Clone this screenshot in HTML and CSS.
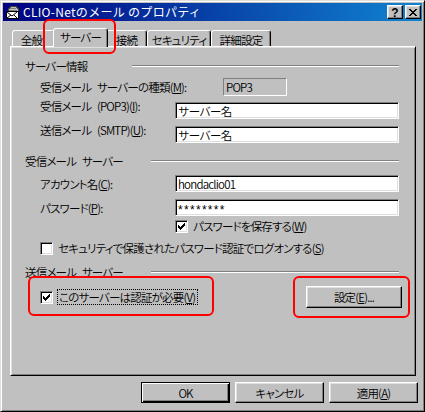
FILE: index.html
```html
<!DOCTYPE html>
<html lang="ja">
<head>
<meta charset="utf-8">
<title>CLIO-Netのメール のプロパティ</title>
<link rel="stylesheet" href="styles.css">
</head>
<body>
<div class="window">
  <div class="titlebar">
    <svg class="app-icon" width="16" height="16" viewBox="0 0 16 16" shape-rendering="crispEdges">
      <path d="M3 8V4h1V3h1V2h6v1h1v1h1v4z" fill="#c0c0c0" stroke="#404040" stroke-width="1"/>
      <path d="M5 4h6M4 6h8" stroke="#808080" stroke-width="1"/>
      <rect x="1.5" y="7.5" width="12" height="7" fill="#fff" stroke="#000"/>
      <path d="M2 8l5 4l5-4M2 14l4-3M12 14l-3-3" fill="none" stroke="#000" stroke-width="1" shape-rendering="auto"/>
    </svg>
    <span class="title">CLIO-Netのメール のプロパティ</span>
    <div class="caption-buttons">
      <span class="cap-btn help">?</span>
      <span class="cap-btn close">
        <svg width="8" height="7" viewBox="0 0 8 7" shape-rendering="crispEdges"><path d="M0 0h2v1H0zM6 0h2v1H6zM1 1h2v1H1zM5 1h2v1H5zM2 2h4v1H2zM3 3h2v1H3zM2 4h4v1H2zM1 5h2v1H1zM5 5h2v1H5zM0 6h2v1H0zM6 6h2v1H6z" fill="#000"/></svg>
      </span>
    </div>
  </div>

  <div class="content">
    <div class="tabs">
      <div class="tab t1">全般</div>
      <div class="tab t2 active">サーバー</div>
      <div class="tab t3">接続</div>
      <div class="tab t4">セキュリティ</div>
      <div class="tab t5">詳細設定</div>
    </div>

    <div class="panel">
      <div class="group-head gh1"><span class="gh-text">サーバー情報</span><span class="etch etch-long"></span></div>
      <div class="row row-m">
        <span class="label label-wide">受信メール サーバーの種類(<u>M</u>):</span>
        <span class="static-field">POP3</span>
      </div>
      <div class="row row-c">
        <span class="label label-up">受信メール (POP3)(<u>I</u>):</span>
        <div class="edit">サーバー名</div>
      </div>
      <div class="row row-d">
        <span class="label label-up">送信メール (SMTP)(<u>U</u>):</span>
        <div class="edit">サーバー名</div>
      </div>

      <div class="group-head gh2"><span class="gh-text">受信メール サーバー</span><span class="etch etch-short"></span></div>
      <div class="row row-f">
        <span class="label">アカウント名(<u>C</u>):</span>
        <div class="edit">hondaclio01</div>
      </div>
      <div class="row row-g">
        <span class="label">パスワード(<u>P</u>):</span>
        <div class="edit edit-pw">********</div>
      </div>
      <div class="row row-h">
        <span class="label"></span>
        <span class="checkbox checked"><svg width="7" height="7" viewBox="0 0 7 7" shape-rendering="crispEdges"><path d="M6 0h1v1H6zM5 1h2v1H5zM0 2h1v1H0zM4 2h3v1H4zM0 3h2v1H0zM3 3h3v1H3zM0 4h5v1H0zM1 5h3v1H1zM2 6h1v1H2z" fill="#000"/></svg></span>
        <span class="cb-text">パスワードを保存する(<u>W</u>)</span>
      </div>
      <div class="row row-i">
        <span class="checkbox"></span>
        <span class="cb-text">セキュリティで保護されたパスワード認証でログオンする(<u>S</u>)</span>
      </div>

      <div class="group-head gh3"><span class="gh-text">送信メール サーバー</span><span class="etch etch-short"></span></div>
      <div class="row row-k">
        <span class="checkbox checked"><svg width="7" height="7" viewBox="0 0 7 7" shape-rendering="crispEdges"><path d="M6 0h1v1H6zM5 1h2v1H5zM0 2h1v1H0zM4 2h3v1H4zM0 3h2v1H0zM3 3h3v1H3zM0 4h5v1H0zM1 5h3v1H1zM2 6h1v1H2z" fill="#000"/></svg></span>
        <span class="cb-text focus">このサーバーは認証が必要(<u>V</u>)</span>
        <span class="btn btn-settings">設定(<u>E</u>)...</span>
      </div>
    </div>

    <div class="dialog-buttons">
      <span class="btn btn-dlg default">OK</span>
      <span class="btn btn-dlg">キャンセル</span>
      <span class="btn btn-dlg">適用(<u>A</u>)</span>
    </div>
  </div>

  <div class="mark mark-tab"></div>
  <div class="mark mark-check"></div>
  <div class="mark mark-btn"></div>
</div>
</body>
</html>
```

FILE: styles.css
```css
* { box-sizing: border-box; }

html, body {
  margin: 0;
  padding: 0;
}

body {
  width: 425px;
  height: 412px;
  overflow: hidden;
  background: #c0c0c0;
  font-family: "Noto Sans CJK JP", "Noto Sans", sans-serif;
  font-size: 11.5px;
  font-weight: 350;
  letter-spacing: -0.8px;
  word-spacing: 4px;
  line-height: 14px;
  color: #000;
  font-feature-settings: "palt";
}

u { text-decoration: underline; text-underline-offset: 1px; }

.window {
  position: relative;
  width: 425px;
  height: 412px;
  background: #c0c0c0;
  border: 1px solid;
  border-color: #dfdfdf #000 #000 #dfdfdf;
  box-shadow: inset 1px 1px #fff, inset -1px -1px #808080;
  padding: 2px;
  display: flex;
  flex-direction: column;
}

/* ---------- title bar ---------- */
.titlebar {
  height: 18px;
  display: flex;
  align-items: center;
  background: linear-gradient(to right, #000080, #1084d0);
  color: #fff;
  flex: none;
}

.app-icon {
  margin-left: 2px;
  flex: none;
}

.title {
  margin-left: 2px;
  font-size: 12px;
  font-weight: 400;
  font-feature-settings: normal;
  white-space: nowrap;
  letter-spacing: 0.3px;
  word-spacing: 0;
}

.caption-buttons {
  margin-left: auto;
  display: flex;
  gap: 2px;
  padding-right: 1px;
}

.cap-btn {
  width: 16px;
  height: 14px;
  background: #c0c0c0;
  border: 1px solid;
  border-color: #fff #000 #000 #fff;
  box-shadow: inset -1px -1px #808080, inset 1px 1px #dfdfdf;
  display: flex;
  align-items: center;
  justify-content: center;
  color: #000;
  letter-spacing: 0;
}

.help {
  font-family: "Liberation Sans", sans-serif;
  font-weight: bold;
  font-size: 12px;
  line-height: 12px;
  padding-top: 1px;
}

/* ---------- content ---------- */
.content {
  flex: 1;
  padding: 7px 6px 0 7px;
  display: flex;
  flex-direction: column;
}

.tabs {
  display: flex;
  align-items: flex-end;
  height: 18px;
  padding-left: 2px;
  position: relative;
  z-index: 2;
}

.tab {
  height: 16px;
  background: #c0c0c0;
  border: 1px solid;
  border-bottom: none;
  border-color: #fff #000 transparent #fff;
  border-radius: 3px 3px 0 0;
  box-shadow: inset -1px 0 #808080;
  display: flex;
  align-items: center;
  justify-content: center;
  padding-top: 2px;
  white-space: nowrap;
  flex: none;
}

.t1 { width: 43px; padding-right: 4px; }
.t2 { width: 51px; }
.t3 { width: 41px; }
.t4 { width: 64px; }
.t5 { width: 60px; }

.tab.active {
  height: 19px;
  margin: 0 -2px -1px;
  width: 55px;
  padding-top: 0;
  padding-bottom: 3px;
  position: relative;
  z-index: 3;
}

.panel {
  height: 330px;
  border: 1px solid;
  border-color: #fff #000 #000 #fff;
  box-shadow: inset 1px 1px #dfdfdf, inset -1px -1px #808080;
  display: flex;
  flex-direction: column;
  padding-right: 16px;
  position: relative;
  z-index: 1;
}

.group-head {
  height: 14px;
  display: flex;
  align-items: center;
  padding-left: 14px;
  white-space: nowrap;
}

.gh1 { margin-top: 12px; }
.gh2 { margin-top: 11px; }
.gh3 { margin-top: 10px; }

.etch {
  margin-left: auto;
  height: 2px;
  border-top: 1px solid #808080;
  border-bottom: 1px solid #fff;
}

.etch-long { width: 267px; }
.etch-short { width: 248px; }

.row {
  display: flex;
  align-items: center;
  padding-left: 29px;
  white-space: nowrap;
}

.row-m { height: 18px; margin-top: 5px; }
.row-c { height: 17px; margin-top: 6px; }
.row-d { height: 17px; margin-top: 7px; }
.row-f { height: 17px; margin-top: 7px; }
.row-g { height: 17px; margin-top: 7px; }
.row-h { height: 14px; margin-top: 3px; }
.row-i { height: 14px; margin-top: 8px; }
.row-k { height: 22px; margin-top: 7px; }

.label {
  width: 135px;
  flex: none;
}

.label-wide { width: 183px; }

.label-up {
  align-self: flex-start;
  margin-top: -3px;
}

.static-field {
  width: 64px;
  height: 18px;
  border: 1px solid;
  border-color: #808080 #fff #fff #808080;
  padding-left: 2px;
  display: flex;
  align-items: center;
}

.edit {
  flex: 1;
  height: 17px;
  background: #fff;
  border: 1px solid;
  border-color: #808080 #fff #fff #808080;
  box-shadow: inset 1px 1px #000, inset -1px -1px #dfdfdf;
  padding-left: 2px;
  display: flex;
  align-items: center;
  font-feature-settings: normal;
}

.edit-pw {
  font-family: "Liberation Sans", sans-serif;
  font-size: 12px;
  font-weight: 400;
  letter-spacing: 1.3px;
  padding-top: 4px;
}

.checkbox {
  width: 13px;
  height: 13px;
  flex: none;
  background: #fff;
  border: 1px solid;
  border-color: #808080 #fff #fff #808080;
  box-shadow: inset 1px 1px #000, inset -1px -1px #dfdfdf;
  display: flex;
  align-items: center;
  justify-content: center;
}

.cb-text {
  margin-left: 5px;
}

.focus {
  margin-left: 4px;
  height: 16px;
  padding: 0 2px 0 1px;
  border: 1px dotted #000;
  display: flex;
  align-items: center;
}

.btn {
  background: #c0c0c0;
  border: 1px solid;
  border-color: #fff #000 #000 #fff;
  box-shadow: inset -1px -1px #808080, inset 1px 1px #dfdfdf;
  display: flex;
  align-items: center;
  justify-content: center;
  white-space: nowrap;
  flex: none;
}

.btn-settings {
  margin-left: auto;
  margin-right: -3px;
  width: 96px;
  height: 22px;
}

.dialog-buttons {
  display: flex;
  justify-content: flex-end;
  gap: 5px;
  margin-top: 6px;
  margin-right: -2px;
}

.btn-dlg {
  width: 89px;
  height: 21px;
}

.btn-dlg.default {
  border-color: #000;
  box-shadow: inset 1px 1px #fff, inset -1px -1px #000, inset -2px -2px #808080;
}

/* ---------- red annotation marks ---------- */
.mark {
  position: absolute;
  border: 2px solid #ff0000;
  border-radius: 6px;
  z-index: 5;
}

.mark-tab { left: 42px; top: 18px; width: 73px; height: 35px; }
.mark-check { left: 27px; top: 275px; width: 186px; height: 40px; }
.mark-btn { left: 292px; top: 275px; width: 117px; height: 42px; }
```
